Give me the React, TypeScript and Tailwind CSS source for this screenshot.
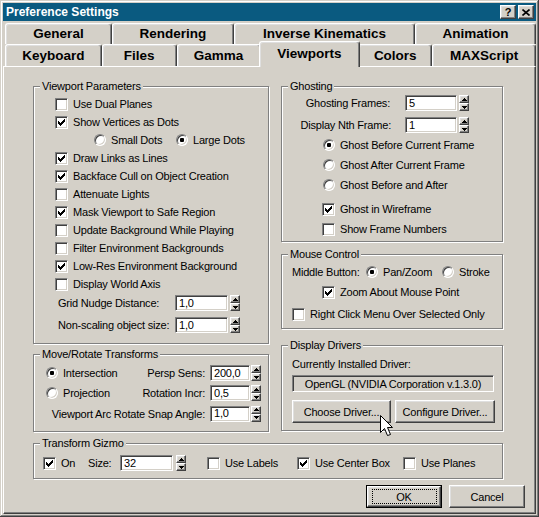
import React from "react";

const raised =
  "bg-[#d4d0c8] border border-t-white border-l-white border-r-[#404040] border-b-[#404040] shadow-[inset_-1px_-1px_0_#808080,inset_1px_1px_0_#dfdfdf]";
const sunken =
  "border border-t-[#808080] border-l-[#808080] border-r-white border-b-white shadow-[inset_1px_1px_0_#404040,inset_-1px_-1px_0_#d4d0c8]";

function Box({ on }: { on?: boolean }) {
  return (
    <span className={`relative block w-[13px] h-[13px] shrink-0 bg-white ${sunken}`}>
      {on && (
        <svg
          className="absolute left-[2px] top-[2px]"
          width="7"
          height="7"
          viewBox="0 0 7 7"
          shapeRendering="crispEdges"
        >
          <path
            d="M6 0h1v1h-1z M5 1h2v1h-2z M0 2h1v1h-1z M4 2h3v1h-3z M0 3h2v1h-2z M3 3h3v1h-3z M0 4h5v1h-5z M1 5h3v1h-3z M2 6h1v1h-1z"
            fill="#000"
          />
        </svg>
      )}
    </span>
  );
}

function Cb({ on, label, className = "" }: { on?: boolean; label: string; className?: string }) {
  return (
    <div className={`flex items-center gap-[5px] ${className}`}>
      <Box on={on} />
      <span className="whitespace-nowrap">{label}</span>
    </div>
  );
}

function Rd({ on, label, className = "" }: { on?: boolean; label: string; className?: string }) {
  return (
    <div className={`flex items-center gap-[5px] ${className}`}>
      <span
        className={`flex items-center justify-center w-[12px] h-[12px] shrink-0 rounded-full bg-white ${sunken}`}
      >
        {on && <span className="block w-[4px] h-[4px] rounded-[1px] bg-black" />}
      </span>
      <span className="whitespace-nowrap">{label}</span>
    </div>
  );
}

function Field({ value, className = "" }: { value: string; className?: string }) {
  return (
    <div className={`h-[16px] bg-white flex items-center pl-[3px] leading-[13px] ${sunken} ${className}`}>
      {value}
    </div>
  );
}

function Spin({ className = "" }: { className?: string }) {
  return (
    <div className={`flex flex-col h-[16px] w-[10px] shrink-0 ${className}`}>
      <div className={`h-[8px] flex items-center justify-center ${raised}`}>
        <svg width="5" height="3" viewBox="0 0 5 3" shapeRendering="crispEdges">
          <path d="M2 0h1v1h-1z M1 1h3v1h-3z M0 2h5v1h-5z" fill="#000" />
        </svg>
      </div>
      <div className={`h-[8px] flex items-center justify-center ${raised}`}>
        <svg width="5" height="3" viewBox="0 0 5 3" shapeRendering="crispEdges">
          <path d="M0 0h5v1h-5z M1 1h3v1h-3z M2 2h1v1h-1z" fill="#000" />
        </svg>
      </div>
    </div>
  );
}

function Group({
  title,
  className = "",
  children,
}: {
  title: string;
  className?: string;
  children?: React.ReactNode;
}) {
  return (
    <div
      className={`relative border border-[#808080] shadow-[1px_1px_0_#fff,inset_1px_1px_0_#fff] ${className}`}
    >
      <span className="absolute -top-[8px] left-[6px] px-[2px] bg-[#d4d0c8] leading-[14px] whitespace-nowrap">
        {title}
      </span>
      {children}
    </div>
  );
}

function Btn({ label, className = "" }: { label: string; className?: string }) {
  return (
    <div className={`h-[23px] flex items-center justify-center ${raised} ${className}`}>{label}</div>
  );
}

function Tab({ label, className = "" }: { label: string; className?: string }) {
  return (
    <div
      className={`flex items-center justify-center bg-[#d4d0c8] border-t border-l border-r border-t-white border-l-white border-r-[#404040] rounded-t-[3px] shadow-[inset_-1px_0_0_#808080,inset_1px_1px_0_#dfdfdf] ${className}`}
    >
      {label}
    </div>
  );
}

export default function App() {
  return (
    <div className="w-[539px] h-[517px] bg-[#d4d0c8] p-[3px] flex flex-col font-['Liberation_Sans',Arial,sans-serif] text-[11px] leading-[14px] tracking-[-0.2px] text-black shadow-[inset_-1px_-1px_0_#404040,inset_1px_1px_0_#d4d0c8,inset_-2px_-2px_0_#808080,inset_2px_2px_0_#fff] overflow-hidden">
      {/* Title bar */}
      <div className="h-[18px] shrink-0 bg-[#0a5a80] flex items-center justify-between pl-[3px] pr-[2px]">
        <span className="text-white font-bold text-[12px] tracking-normal">Preference Settings</span>
        <div className="flex gap-[2px]">
          <div className={`w-[16px] h-[14px] flex items-center justify-center font-bold text-[11px] leading-none tracking-normal ${raised}`}>
            ?
          </div>
          <div className={`w-[16px] h-[14px] flex items-center justify-center ${raised}`}>
            <svg width="8" height="7" viewBox="0 0 8 7">
              <path d="M0.5 0.5 L7.5 6.5 M7.5 0.5 L0.5 6.5" stroke="#000" strokeWidth="1.6" />
            </svg>
          </div>
        </div>
      </div>

      {/* Tabs */}
      <div className="shrink-0 pl-[2px] font-bold text-[13.5px] tracking-normal">
        <div className="mt-[2px] h-[21px] flex">
          <Tab label="General" className="w-[107px] h-[21px]" />
          <Tab label="Rendering" className="w-[122px] h-[21px]" />
          <Tab label="Inverse Kinematics" className="w-[181px] h-[21px]" />
          <Tab label="Animation" className="w-[121px] h-[21px]" />
        </div>
        <div className="h-[22px] flex items-end">
          <Tab label="Keyboard" className="w-[97px] h-[22px]" />
          <Tab label="Files" className="w-[75px] h-[22px]" />
          <Tab label="Gamma" className="w-[84px] h-[22px]" />
          <Tab
            label="Viewports"
            className="relative z-10 w-[102px] h-[26px] -mx-[2px] -mb-[1px] pb-[2px]"
          />
          <Tab label="Colors" className="w-[74px] h-[22px]" />
          <Tab label="MAXScript" className="w-[104px] h-[22px]" />
        </div>
      </div>

      {/* Panel */}
      <div className="flex-1 border-t border-l border-r border-b border-t-white border-l-white border-r-[#404040] border-b-[#404040] shadow-[inset_-1px_-1px_0_#808080] pl-[29px] pt-[19px]">
        <div className="flex gap-[12px]">
          {/* Left column */}
          <div className="w-[236px] flex flex-col gap-[10px]">
            <Group title="Viewport Parameters" className="h-[258px]">
              <div className="pt-[8px] pl-[21px] flex flex-col">
                <Cb label="Use Dual Planes" className="h-[18px]" />
                <Cb on label="Show Vertices as Dots" className="h-[18px]" />
                <div className="h-[18px] flex items-center pl-[39px]">
                  <Rd label="Small Dots" className="w-[82px]" />
                  <Rd on label="Large Dots" />
                </div>
                <Cb on label="Draw Links as Lines" className="h-[18px]" />
                <Cb on label="Backface Cull on Object Creation" className="h-[18px]" />
                <Cb label="Attenuate Lights" className="h-[18px]" />
                <Cb on label="Mask Viewport to Safe Region" className="h-[18px]" />
                <Cb label="Update Background While Playing" className="h-[18px]" />
                <Cb label="Filter Environment Backgrounds" className="h-[18px]" />
                <Cb on label="Low-Res Environment Background" className="h-[18px]" />
                <Cb label="Display World Axis" className="h-[18px]" />
                <div className="mt-[2px] h-[16px] flex items-center pl-[3px]">
                  <span className="w-[117px] whitespace-nowrap">Grid Nudge Distance:</span>
                  <Field value="1,0" className="w-[53px]" />
                  <Spin className="ml-[2px]" />
                </div>
                <div className="mt-[6px] h-[16px] flex items-center pl-[3px]">
                  <span className="w-[117px] whitespace-nowrap">Non-scaling object size:</span>
                  <Field value="1,0" className="w-[53px]" />
                  <Spin className="ml-[2px]" />
                </div>
              </div>
            </Group>

            <Group title="Move/Rotate Transforms" className="h-[78px]">
              <div className="pt-[8px] pl-[12px] pr-[7px] flex flex-col">
                <div className="h-[20px] flex items-center">
                  <div className="flex-1">
                    <Rd on label="Intersection" />
                  </div>
                  <span className="whitespace-nowrap">Persp Sens:</span>
                  <Field value="200,0" className="w-[40px] ml-[5px]" />
                  <Spin className="ml-[1px]" />
                </div>
                <div className="h-[20px] flex items-center">
                  <div className="flex-1">
                    <Rd label="Projection" />
                  </div>
                  <span className="whitespace-nowrap">Rotation Incr:</span>
                  <Field value="0,5" className="w-[40px] ml-[5px]" />
                  <Spin className="ml-[1px]" />
                </div>
                <div className="h-[21px] flex items-center">
                  <span className="flex-1 text-right whitespace-nowrap">Viewport Arc Rotate Snap Angle:</span>
                  <Field value="1,0" className="w-[40px] ml-[5px]" />
                  <Spin className="ml-[1px]" />
                </div>
              </div>
            </Group>
          </div>

          {/* Right column */}
          <div className="w-[222px] flex flex-col">
            <Group title="Ghosting" className="h-[156px]">
              <div className="pt-[8px] flex flex-col">
                <div className="h-[16px] flex items-center">
                  <span className="w-[108px] text-right whitespace-nowrap">Ghosting Frames:</span>
                  <Field value="5" className="w-[52px] ml-[15px]" />
                  <Spin className="ml-[2px]" />
                </div>
                <div className="mt-[6px] h-[16px] flex items-center">
                  <span className="w-[109px] text-right whitespace-nowrap">Display Nth Frame:</span>
                  <Field value="1" className="w-[52px] ml-[14px]" />
                  <Spin className="ml-[2px]" />
                </div>
                <div className="mt-[2px] pl-[41px] flex flex-col">
                  <Rd on label="Ghost Before Current Frame" className="h-[20px]" />
                  <Rd label="Ghost After Current Frame" className="h-[20px]" />
                  <Rd label="Ghost Before and After" className="h-[19px]" />
                </div>
                <div className="mt-[5px] pl-[40px] flex flex-col">
                  <Cb on label="Ghost in Wireframe" className="h-[20px]" />
                  <Cb label="Show Frame Numbers" className="h-[20px]" />
                </div>
              </div>
            </Group>

            <Group title="Mouse Control" className="mt-[12px] h-[75px]">
              <div className="pt-[8px] pl-[10px] flex flex-col">
                <div className="h-[18px] flex items-center">
                  <span className="w-[74px] whitespace-nowrap">Middle Button:</span>
                  <Rd on label="Pan/Zoom" className="w-[76px]" />
                  <Rd label="Stroke" />
                </div>
                <Cb on label="Zoom About Mouse Point" className="mt-[2px] h-[18px] pl-[30px]" />
                <Cb label="Right Click Menu Over Selected Only" className="mt-[4px] h-[18px]" />
              </div>
            </Group>

            <Group title="Display Drivers" className="mt-[16px] h-[86px]">
              <div className="pt-[11px] pl-[10px] flex flex-col">
                <span className="h-[14px] whitespace-nowrap">Currently Installed Driver:</span>
                <div
                  className={`mt-[4px] w-[202px] h-[17px] flex items-center justify-center bg-[#d4d0c8] ${sunken}`}
                >
                  OpenGL (NVIDIA Corporation v.1.3.0)
                </div>
                <div className="mt-[8px] flex gap-[4px]">
                  <Btn label="Choose Driver..." className="w-[99px]" />
                  <Btn label="Configure Driver..." className="w-[100px]" />
                </div>
              </div>
              <svg
                className="absolute left-[98px] top-[69px]"
                width="14"
                height="22"
                viewBox="0 0 14 22"
              >
                <path
                  d="M0.5 0.5 L0.5 17.5 L4.5 13.5 L7.5 20.5 L10.5 19.5 L7.5 12.5 L12.5 12.5 Z"
                  fill="#fff"
                  stroke="#000"
                  strokeWidth="1"
                />
              </svg>
            </Group>
          </div>
        </div>

        <Group title="Transform Gizmo" className="mt-[11px] w-[470px] h-[36px]">
          <div className="pt-[4px] h-full flex items-center pl-[9px]">
            <Cb on label="On" className="w-[45px]" />
            <span className="w-[32px]">Size:</span>
            <Field value="32" className="w-[53px]" />
            <Spin className="ml-[3px]" />
            <Cb label="Use Labels" className="ml-[21px] w-[90px]" />
            <Cb on label="Use Center Box" className="w-[106px]" />
            <Cb label="Use Planes" />
          </div>
        </Group>

        <div className="mt-[6px] flex gap-[7px] pl-[333px]">
          <div className="w-[76px] h-[23px] border border-black">
            <div className={`w-full h-full flex items-center justify-center ${raised}`}>
              <div className="w-[65px] h-[15px] border border-dotted border-black flex items-center justify-center">
                OK
              </div>
            </div>
          </div>
          <Btn label="Cancel" className="w-[76px]" />
        </div>
      </div>
    </div>
  );
}
